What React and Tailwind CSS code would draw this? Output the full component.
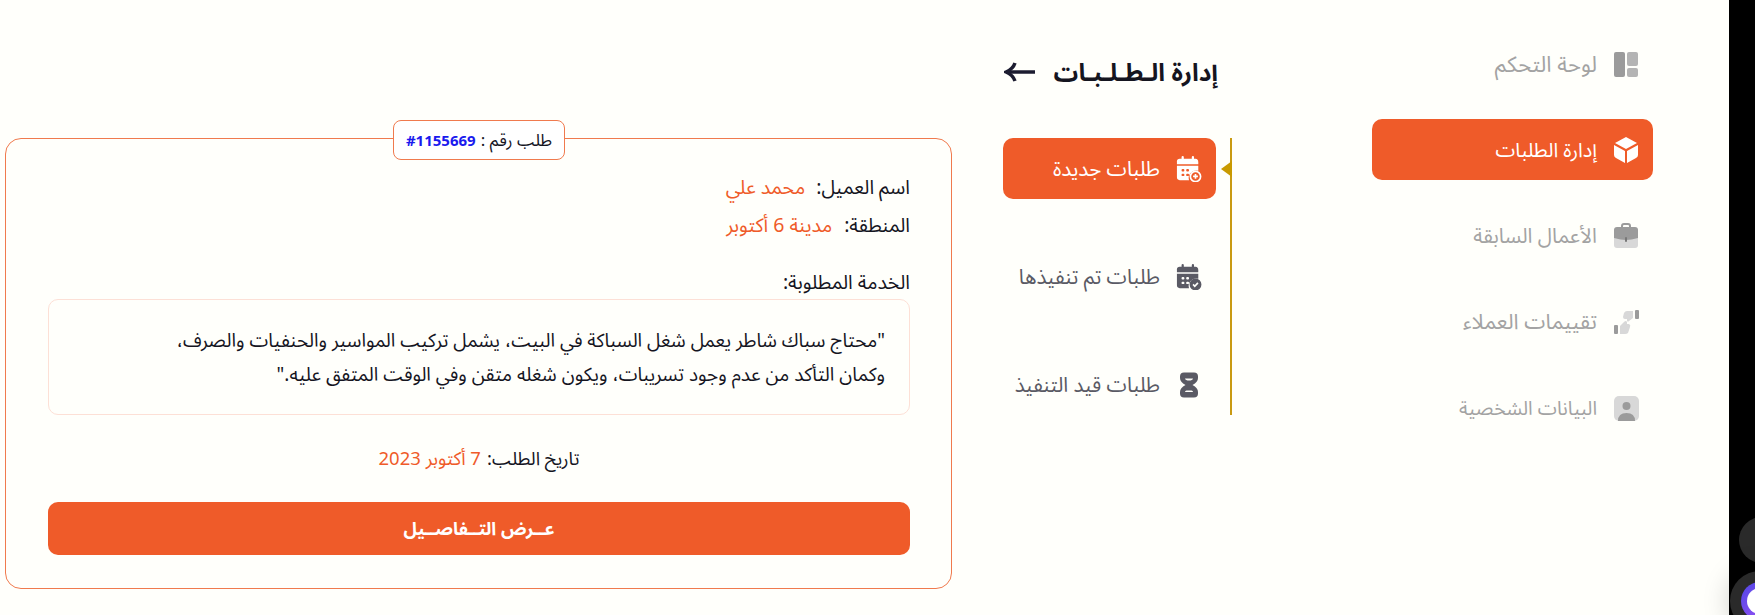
import React from "react";

const Dashboard = () => (
  <svg width="26" height="26" viewBox="0 0 26 26"><rect x="1" y="1" width="11" height="25" rx="2" fill="#9b9b9b"/><rect x="14" y="1" width="11" height="14" rx="2" fill="#b4b4b4"/><rect x="14" y="17" width="11" height="9" rx="2" fill="#b4b4b4"/></svg>
);
const Box = () => (
  <svg width="26" height="28" viewBox="0 0 26 28" fill="#fff"><path d="M13 1 L24 7 L13 13 L2 7 Z"/><path d="M1 9 L12 15 V27 L3 22 Q1 21 1 19 Z"/><path d="M25 9 L14 15 V27 L23 22 Q25 21 25 19 Z"/></svg>
);
const Bag = () => (
  <svg width="26" height="26" viewBox="0 0 26 26"><path d="M9 5 V3 Q9 1 11 1 H15 Q17 1 17 3 V5" fill="none" stroke="#9b9b9b" strokeWidth="2"/><path d="M1 15 H25 V22 Q25 25 22 25 H4 Q1 25 1 22 Z" fill="#d8d8d8"/><path d="M4 4 H22 Q25 4 25 7 V15 Q18 17 13 17 Q8 17 1 15 V7 Q1 4 4 4 Z" fill="#9b9b9b"/><rect x="12" y="14" width="2" height="5" rx="1" fill="#777"/></svg>
);
const Thumbs = () => (
  <svg width="26" height="26" viewBox="0 0 26 26"><rect x="1" y="16" width="4" height="9" rx="1" fill="#9b9b9b"/><path d="M7 17 L11 13 Q13 11 14 13 L14 15 H16 Q18 16 17 18 L15 24 Q14 25 12 25 H7 Z" fill="#d8d8d8"/><rect x="22" y="1" width="4" height="9" rx="1" fill="#9b9b9b"/><path d="M20 2 H14 Q12 2 11 4 L10 8 Q10 10 12 10 H14 L14 12 Q15 13 16 12 L20 9 Z" fill="#d8d8d8"/></svg>
);
const User = () => (
  <svg width="26" height="26" viewBox="0 0 26 26"><rect x="1" y="1" width="25" height="25" rx="5" fill="#d8d8d8"/><circle cx="13.5" cy="11" r="4" fill="#9b9b9b"/><path d="M5 26 Q5 18 13.5 18 Q22 18 22 26 Z" fill="#9b9b9b"/></svg>
);
const Cal = ({ c, plus }) => (
  <svg width="26" height="26" viewBox="0 0 28 28" className="block">
    <rect x="6" y="0" width="2.4" height="6" rx="1.2" fill={c}/><rect x="17" y="0" width="2.4" height="6" rx="1.2" fill={c}/>
    <path d="M4 3 H21 Q24 3 24 7 V9 H1 V6 Q1 3 4 3 Z" fill={c}/>
    <path d="M1 10.5 H24 V16 A8 8 0 0 0 14 26 H4 Q1 26 1 23 Z" fill={c}/>
    <g fill={plus ? "#ef5b29" : "#fffffb"}><rect x="6" y="14" width="3" height="2.6" rx="1"/><rect x="11" y="14" width="3" height="2.6" rx="1"/><rect x="6" y="19" width="3" height="2.6" rx="1"/><rect x="11" y="19" width="3" height="2.6" rx="1"/></g>
    <circle cx="21" cy="22" r="5.5" fill={plus ? "none" : c} stroke={c} strokeWidth="1.8"/>
    {plus ? <path d="M18.4 22 H23.6 M21 19.4 V24.6" stroke={c} strokeWidth="1.8"/> : <path d="M18.4 22 L20.2 24 L23.6 20.3" fill="none" stroke="#fffffb" strokeWidth="1.8"/>}
  </svg>
);
const Hourglass = () => (
  <svg width="18" height="26" viewBox="0 0 18 26" fill="#5a5a64"><path fillRule="evenodd" d="M4 0.5 H14 Q18 0.5 18 4.5 V6 Q18 10 12.5 13 Q18 16 18 20 V21.5 Q18 25.5 14 25.5 H4 Q0 25.5 0 21.5 V20 Q0 16 5.5 13 Q0 10 0 6 V4.5 Q0 0.5 4 0.5 Z M5 6.5 Q5.5 8.5 9 8.5 Q12.5 8.5 13 6.5 Z M6.5 18.5 H11.5 Q13 18.5 13 20 H5 Q5 18.5 6.5 18.5 Z"/></svg>
);

const nav = [
  ["لوحة التحكم", <Dashboard />, "text-[22px] text-[#a3a3a3]"],
  ["إدارة الطلبات", <Box />, "text-[20px] bg-[#ef5b29] text-white"],
  ["الأعمال السابقة", <Bag />, "text-[20.5px] text-[#a3a3a3]"],
  ["تقييمات العملاء", <Thumbs />, "text-[21.4px] text-[#a3a3a3]"],
  ["البيانات الشخصية", <User />, "text-[19.4px] text-[#a3a3a3]"],
];

export default function App() {
  return (
    <div dir="rtl" className="flex h-[615px] w-full overflow-hidden bg-[#fffffb] font-['Noto_Sans','Noto_Sans_Arabic','DejaVu_Sans',sans-serif]">
      <aside className="relative h-full w-[26px] shrink-0 bg-[#000000]">
        <div className="absolute left-[10px] top-[517px] h-[46px] w-[46px] rounded-full bg-[#2a2a2a]" />
        <div className="absolute left-[1px] top-[571px] flex h-[60px] w-[60px] items-center justify-end rounded-full bg-[#2a2a2a] pl-[11px] shadow-[0_0_28px_rgba(0,0,0,0.22)]">
          <div className="flex h-[38px] w-[38px] items-center justify-center rounded-full bg-[linear-gradient(135deg,#4f46e5,#a855f7)]">
            <div className="flex h-[26px] w-[26px] items-center justify-center rounded-full bg-white">
              <div className="h-[14px] w-[8px] rounded-full bg-[#222]" />
            </div>
          </div>
        </div>
      </aside>

      <nav className="mr-[76px] flex w-[281px] shrink-0 flex-col gap-[25px] pt-[33px]">
        {nav.map(([label, icon, cls]) => (
          <div key={label} className={`flex h-[61px] items-center gap-[16px] rounded-[10px] pr-[14px] ${cls}`}>
            <span className="flex w-[26px] justify-center">{icon}</span>
            <span>{label}</span>
          </div>
        ))}
      </nav>

      <section className="mr-[140px] w-[229px] shrink-0 pt-[52px]">
        <div className="flex h-[40px] items-center justify-between pl-[1px] pr-[14px]">
          <span className="text-[24.5px] font-bold text-[#15151f]">إدارة الـطـلـبـات</span>
          <svg width="32" height="24" viewBox="0 0 32 24" fill="none" stroke="#1c1c30" strokeWidth="3.5"><path d="M2 12 H31"/><path d="M11 3 Q9 9 2 12 Q9 15 11 21"/></svg>
        </div>
        <div className="relative mt-[46px] flex h-[277px] flex-col gap-[47px] border-r-2 border-[#c99a12] pr-[14px]">
          <div className="absolute right-[-2px] top-[23px] h-0 w-0 border-y-[8px] border-r-[11px] border-y-transparent border-r-[#c99a00]" />
          <div className="flex h-[61px] items-center gap-[16px] rounded-[10px] bg-[#ef5b29] pr-[14px] text-[20.5px] text-white">
            <span className="w-[26px]"><Cal c="#fff" plus /></span><span>طلبات جديدة</span>
          </div>
          <div className="flex h-[61px] items-center gap-[16px] pr-[14px] text-[20.5px] text-[#5a5a64]">
            <span className="w-[26px]"><Cal c="#5a5a64" /></span><span>طلبات تم تنفيذها</span>
          </div>
          <div className="flex h-[61px] items-center gap-[16px] pr-[14px] text-[20.5px] text-[#5a5a64]">
            <span className="flex w-[26px] justify-center"><Hourglass /></span><span>طلبات قيد التنفيذ</span>
          </div>
        </div>
      </section>

      <main className="relative mr-[51px] mt-[138px] h-[451px] w-[947px] shrink-0 rounded-[16px] border border-[#f07a4e] pl-[42px] pr-[41px] pt-[35px] text-[19.5px] text-[#15151f]">
        <div className="absolute left-[387px] top-[-19px] flex h-[40px] w-[172px] items-center justify-center gap-[5px] rounded-[8px] border border-[#f07a4e] bg-white text-[17px]">
          <span>طلب رقم :</span><span dir="ltr" className="text-[15px] font-bold text-[#1a1aee]">#1155669</span>
        </div>
        <div className="flex h-[26px] items-center gap-[11px]"><span>اسم العميل:</span><span className="text-[#ef5b29]">محمد علي</span></div>
        <div className="mt-[12px] flex h-[26px] items-center gap-[12px]"><span>المنطقة:</span><span className="text-[#ef5b29]">مدينة 6 أكتوبر</span></div>
        <div className="mt-[31px] h-[26px] leading-[26px]">الخدمة المطلوبة:</div>
        <div className="mt-[4px] flex h-[116px] flex-col justify-center rounded-[10px] border border-[#fde0d6] px-[24px] text-[19px] leading-[34px]">
          <p>"محتاج سباك شاطر يعمل شغل السباكة في البيت، يشمل تركيب المواسير والحنفيات والصرف،</p>
          <p>وكمان التأكد من عدم وجود تسريبات، ويكون شغله متقن وفي الوقت المتفق عليه."</p>
        </div>
        <div className="mt-[30px] flex h-[26px] items-center justify-center gap-[6px] text-[18.5px]"><span>تاريخ الطلب:</span><span className="text-[#ef5b29]">7 أكتوبر 2023</span></div>
        <button className="mt-[31px] h-[53px] w-full rounded-[10px] bg-[#ef5b29] text-[18px] font-bold text-white">عــرض التــفاصــيل</button>
      </main>
    </div>
  );
}
